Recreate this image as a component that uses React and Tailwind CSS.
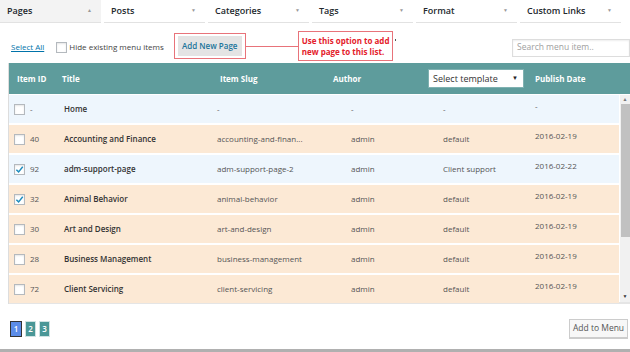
import React from "react";

const tabs = [
  { label: "Pages", up: true },
  { label: "Posts" },
  { label: "Categories" },
  { label: "Tags" },
  { label: "Format" },
  { label: "Custom Links" },
];

const rows = [
  { id: "-", title: "Home", slug: "-", author: "-", tpl: "-", date: "-", blue: true },
  { id: "40", title: "Accounting and Finance", slug: "accounting-and-finan...", author: "admin", tpl: "default", date: "2016-02-19" },
  { id: "92", title: "adm-support-page", slug: "adm-support-page-2", author: "admin", tpl: "Client support", date: "2016-02-22", blue: true, checked: true },
  { id: "32", title: "Animal Behavior", slug: "animal-behavior", author: "admin", tpl: "default", date: "2016-02-19", checked: true },
  { id: "30", title: "Art and Design", slug: "art-and-design", author: "admin", tpl: "default", date: "2016-02-19" },
  { id: "28", title: "Business Management", slug: "business-management", author: "admin", tpl: "default", date: "2016-02-19" },
  { id: "72", title: "Client Servicing", slug: "client-servicing", author: "admin", tpl: "default", date: "2016-02-19" },
];

function Check({ checked }) {
  return (
    <span className="flex h-[11px] w-[11px] shrink-0 items-center justify-center border border-[#b4b9be] bg-white shadow-[inset_0_1px_2px_rgba(0,0,0,0.1)]">
      {checked && (
        <svg width="9" height="9" viewBox="0 0 10 10">
          <path d="M1.5 5.2 L4 7.6 L8.6 2" fill="none" stroke="#1e8cbe" strokeWidth="1.6" />
        </svg>
      )}
    </span>
  );
}

export default function App() {
  return (
    <div className="relative h-[352px] w-[630px] overflow-hidden bg-white font-['Open_Sans',sans-serif] text-[#333]">
      {/* tabs */}
      <div className="flex h-[23px] gap-[3px]">
        {tabs.map((t) => (
          <div
            key={t.label}
            className={`flex w-[101px] items-center justify-between border-b border-[#e2e2e2] pl-[7px] pr-[9px] text-[9px] font-semibold text-[#23282d] ${t.up ? "bg-[#f3f3f3]" : "bg-white"}`}
          >
            <span>{t.label}</span>
            <span className="text-[5px] text-[#999]">{t.up ? "▲" : "▼"}</span>
          </div>
        ))}
      </div>

      {/* toolbar */}
      <div className="mt-[7px] flex h-[32px] items-center">
        <a className="ml-[11px] mt-[2px] text-[8px] text-[#0073aa] underline">Select All</a>
        <div className="ml-[12px] mt-[2px] flex items-center gap-[2px]">
          <Check />
          <span className="text-[8px] text-[#444]">Hide existing menu items</span>
        </div>
        <div className="ml-[10px] flex h-[26px] w-[72px] items-center justify-center border border-[#e8737a]">
          <span className="flex h-[20px] w-[64px] items-center justify-center bg-[#e4e4e4] text-[8px] font-semibold text-[#21759b]">
            Add New Page
          </span>
        </div>
        <div className="h-px w-[52px] bg-[#e8737a]" />
        <div className="flex h-[30px] w-[95px] flex-col justify-center border border-[#e8737a] pl-[3px] text-[8px] font-bold leading-[11px] text-[#e4202a]">
          <span>Use this option to add</span>
          <span>new page to this list.</span>
        </div>
        <span className="mb-[12px] ml-[2px] h-[1.5px] w-[1.5px] bg-[#555]" />
        <div className="ml-auto mt-[3px] flex h-[18px] w-[118px] items-center border border-[#ddd] pl-[4px] text-[8.5px] text-[#a0a0a0] shadow-[inset_0_1px_2px_rgba(0,0,0,0.07)]">
          Search menu item..
        </div>
      </div>

      {/* table */}
      <div className="ml-[8px] mt-px border-l border-[#ddd]">
        <div className="flex h-[31px] items-center bg-[#5e9c9c] text-[8px] font-bold text-white">
          <span className="w-[53px] pl-[8px]">Item ID</span>
          <span className="w-[158px]">Title</span>
          <span className="w-[113px]">Item Slug</span>
          <span className="w-[95px]">Author</span>
          <span className="w-[107px]">
            <span className="flex h-[19px] w-[96px] items-center justify-between border border-[#7fb1b1] bg-white pl-[4px] pr-[5px] text-[9px] font-normal text-[#333]">
              Select template
              <span className="text-[6px] text-[#222]">▼</span>
            </span>
          </span>
          <span>Publish Date</span>
        </div>
        <div className="flex h-[210px] border-b-2 border-[#e5e5e5] pt-px">
          <div className="flex w-[611px] flex-col gap-[2px]">
            {rows.map((r, i) => (
              <div
                key={i}
                className={`flex h-[28px] shrink-0 items-center text-[8px] ${r.blue ? "bg-[#eef6fd]" : "bg-[#fce9d5]"}`}
              >
                <span className="ml-[5px] w-[16px]">
                  <Check checked={r.checked} />
                </span>
                <span className="w-[34px] text-[#555]">{r.id}</span>
                <span className="w-[153px] font-semibold text-[#333]">{r.title}</span>
                <span className="w-[134px] text-[#555]">{r.slug}</span>
                <span className="w-[92px] text-[#555]">{r.author}</span>
                <span className="w-[92px] text-[#555]">{r.tpl}</span>
                <span className="pb-[7px] text-[#555]">{r.date}</span>
              </div>
            ))}
          </div>
          <div className="ml-px flex w-[10px] flex-col items-center bg-[#f1f1f1]">
            <span className="h-[9px] pt-[1px] text-[5px] leading-[7px] text-[#777]">▲</span>
            <div className="h-[133px] w-[9px] bg-[#c1c1c1]" />
            <div className="flex-1" />
            <span className="h-[9px] text-[5px] leading-[7px] text-[#333]">▼</span>
          </div>
        </div>
      </div>

      {/* footer */}
      <div className="mt-[15px] flex items-center">
        <div className="ml-[10px] flex gap-[3px] text-[8px] font-semibold text-white">
          <span className="flex h-[16px] w-[12px] items-center justify-center border border-[#333] bg-[#5b8ce8]">1</span>
          <span className="flex h-[16px] w-[11px] items-center justify-center border border-[#cfe3e3] bg-[#4a9797]">2</span>
          <span className="flex h-[16px] w-[11px] items-center justify-center border border-[#cfe3e3] bg-[#4a9797]">3</span>
        </div>
        <button className="ml-auto mr-[2px] flex h-[19px] w-[59px] items-center justify-center border border-[#ccc] bg-[#f7f7f7] text-[8.5px] text-[#555] shadow-[0_1px_0_#ccc]">
          Add to Menu
        </button>
      </div>
      <div className="absolute bottom-0 left-0 h-[3px] w-full bg-[#b0b0b0]" />
    </div>
  );
}
